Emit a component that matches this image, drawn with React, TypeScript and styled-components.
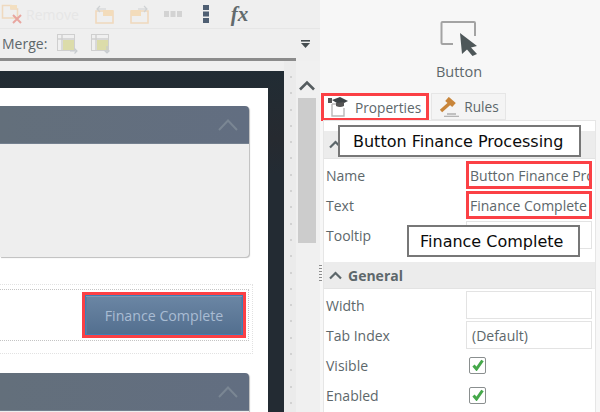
import React from "react";
import styled, { createGlobalStyle } from "styled-components";

const GlobalStyle = createGlobalStyle`
  html, body {
    margin: 0;
    padding: 0;
    background: #f7f7f7;
    font-family: "Open Sans", "Liberation Sans", sans-serif;
  }
`;

const Page = styled.div`
  display: flex;
  width: 600px;
  height: 412px;
  overflow: hidden;
`;

const LeftColumn = styled.div`
  display: flex;
  flex-direction: column;
  width: 320px;
  flex: none;
  background: #efefef;
`;

const ToolRow = styled.div`
  display: flex;
  align-items: center;
  height: 29px;
  flex: none;
  padding-left: 1px;
  border-bottom: 1px solid #e6e6e6;
  box-sizing: border-box;
`;

const MergeRow = styled.div`
  display: flex;
  align-items: center;
  height: 29px;
  flex: none;
  padding: 0 10px 0 2px;
`;

const ToolIcon = styled.svg<{ $left?: number }>`
  flex: none;
  margin-left: ${p => p.$left ?? 0}px;
`;

const DropArrow = styled.svg`
  flex: none;
  margin-left: auto;
`;

const RemoveLabel = styled.span`
  margin-left: 4px;
  font-size: 14px;
  color: #e6e6e6;
`;

const FxLabel = styled.span`
  margin-left: 22px;
  font-family: "Liberation Serif", serif;
  font-size: 21px;
  font-style: italic;
  font-weight: 700;
  line-height: 1;
  color: #626a6d;
`;

const MergeLabel = styled.span`
  font-size: 14px;
  color: #5d676b;
`;

const Ruler = styled.div`
  width: 296px;
  height: 3px;
  flex: none;
  background: #8b8b8b;
`;

const Workspace = styled.div`
  display: flex;
  flex: 1;
  min-height: 0;
`;

const Canvas = styled.div`
  width: 284px;
  flex: none;
  margin-top: 10px;
  padding: 17px 16px 0 0;
  box-sizing: border-box;
  background: linear-gradient(#212c34, #262a30 20%, #232b33 30%);
`;

const Sheet = styled.div`
  height: 100%;
  padding-top: 18px;
  box-sizing: border-box;
  background: #fff;
  overflow: hidden;
`;

const Panel = styled.div<{ $height: number }>`
  width: 249px;
  height: ${p => p.$height}px;
  background: #eeeeee;
  border-radius: 0 4px 4px 0;
  box-shadow: 1px 1px 1px #bdbdbd;
  overflow: hidden;
`;

const PanelHeader = styled.div`
  display: flex;
  align-items: center;
  justify-content: flex-end;
  height: 38px;
  padding-right: 11px;
  box-sizing: border-box;
  background: linear-gradient(90deg, #636f7b, #626e81);
  border-bottom: 1px solid #74808f;
`;

const OuterSlot = styled.div`
  width: 253px;
  height: 70px;
  margin: 27px 0 19px;
  padding-top: 4px;
  box-sizing: border-box;
  border: 1px dotted #e2e2e2;
  border-left: none;
`;

const InnerSlot = styled.div`
  display: flex;
  justify-content: flex-end;
  width: 249px;
  height: 52px;
  padding: 5px 5px 0 0;
  box-sizing: border-box;
  border: 1px dotted #c4c4c4;
  border-left: none;
`;

const FinanceButton = styled.div`
  display: flex;
  align-items: center;
  justify-content: center;
  width: 158px;
  height: 40px;
  box-sizing: border-box;
  background: linear-gradient(#6b86a4, #536f8f);
  border: 1px solid #3b80b8;
  box-shadow: inset 0 1px 0 #7f97b1, inset 1px 0 0 #5d7c9e, inset -1px 0 0 #5d7c9e;
  outline: 3px solid #fb4045;
  color: #a9bcd3;
  font-size: 14.2px;
`;

const DotRail = styled.div`
  width: 12px;
  flex: none;
  background-color: #ebebeb;
  position: relative;
  &::after {
    content: "";
    position: absolute;
    left: 6px;
    top: 15px;
    bottom: 0;
    width: 2px;
    background: repeating-linear-gradient(#d2d2d2 0 2px, transparent 2px 16.3px);
  }
`;

const ScrollGutter = styled.div`
  display: flex;
  flex-direction: column;
  align-items: center;
  width: 24px;
  flex: none;
  padding: 19px 2px 0 0;
  box-sizing: border-box;
  background: #f0f0f0;
`;

const ScrollThumb = styled.div`
  width: 18px;
  height: 145px;
  margin-top: 7px;
  background: #cccccc;
`;

const RightColumn = styled.div`
  position: relative;
  flex: 1;
  min-width: 0;
  display: flex;
  flex-direction: column;
  background: #f7f7f7;
`;

const ResizeGrip = styled.div`
  position: absolute;
  left: -1px;
  top: 265px;
  width: 3px;
  height: 18px;
  background: repeating-linear-gradient(#8c8c8c 0 1px, transparent 1px 3px);
`;

const Preview = styled.div`
  display: flex;
  flex-direction: column;
  align-items: center;
  height: 93px;
  flex: none;
  padding: 20px 2px 0 0;
  box-sizing: border-box;
`;

const PreviewLabel = styled.span`
  margin-top: 6px;
  font-size: 14.5px;
  color: #5d676b;
`;

const Tabs = styled.div`
  display: flex;
  align-items: flex-start;
  height: 27px;
  flex: none;
  padding-left: 1px;
  gap: 2px;
`;

const Tab = styled.div<{ $marked?: boolean }>`
  display: flex;
  align-items: center;
  height: ${p => (p.$marked ? 28 : 27)}px;
  box-sizing: border-box;
  color: #5d676b;
  font-size: 13.7px;
  gap: ${p => (p.$marked ? 7 : 4)}px;
  padding: ${p => (p.$marked ? "0 5px 0 4px" : "0 6px")};
  background: ${p => (p.$marked ? "#fff" : "#f4f4f4")};
  border: ${p => (p.$marked ? "3px solid #fb4045" : "1px solid #e6e6e6")};
`;

const PropertyBody = styled.div`
  flex: 1;
  min-height: 0;
  margin: 0 4px 0 3px;
  padding-top: 10px;
  background: #fff;
  border: 1px solid #e6e6e6;
  border-bottom: none;
`;

const SectionHeader = styled.div<{ $gap?: number; $height: number }>`
  display: flex;
  align-items: center;
  gap: 6px;
  height: ${p => p.$height}px;
  margin-top: ${p => p.$gap ?? 0}px;
  margin-bottom: 1px;
  padding-left: 5px;
  background: #ececec;
  border-bottom: 1px solid #e3e3e3;
  box-sizing: border-box;
  color: #5d676b;
  font-size: 14px;
  font-weight: 700;
`;

const PropertyRow = styled.div`
  display: grid;
  grid-template-columns: 140px 1fr;
  align-items: center;
  height: 30px;
  padding-left: 2px;
  color: #5d676b;
  font-size: 14px;
`;

const FieldBox = styled.div<{ $marked?: boolean }>`
  display: flex;
  align-items: center;
  height: 28px;
  margin-right: 3px;
  padding-left: ${p => (p.$marked ? 1 : 5)}px;
  box-sizing: border-box;
  overflow: hidden;
  white-space: nowrap;
  background: #fff;
  border: ${p => (p.$marked ? "3px solid #fb4045" : "1px solid #e3e3e3")};
  color: #5d676b;
  font-size: 14px;
`;

const CheckBox = styled.div`
  display: flex;
  align-items: center;
  justify-content: center;
  width: 17px;
  height: 17px;
  margin-left: 3px;
  box-sizing: border-box;
  background: #fff;
  border: 1px solid #8a8f8f;
  border-radius: 2px;
`;

const Callout = styled.div<{ $left: number; $top: number; $width: number; $inset: number }>`
  position: absolute;
  left: ${p => p.$left}px;
  top: ${p => p.$top}px;
  width: ${p => p.$width}px;
  height: 32px;
  display: flex;
  align-items: center;
  padding-left: ${p => p.$inset}px;
  box-sizing: border-box;
  background: #fff;
  border: 2px solid #777;
  color: #0b0b0b;
  font-family: "DejaVu Sans", sans-serif;
  font-size: 16px;
`;

const PanelChevron = () => (
  <svg width="20" height="14" viewBox="0 0 20 14" fill="none">
    <path d="M1 12 L10 2.5 L19 12" stroke="#7a8693" strokeWidth="2" />
  </svg>
);

const SectionChevron = () => (
  <svg width="13" height="9" viewBox="0 0 13 9" fill="none">
    <path d="M1 7.5 L6.5 2 L12 7.5" stroke="#5d676b" strokeWidth="2.2" />
  </svg>
);

const Check = () => (
  <svg width="12" height="12" viewBox="0 0 12 12" fill="none">
    <path d="M1.5 6.5 L4.5 10 L10.5 1.5" stroke="#45a84a" strokeWidth="3" />
  </svg>
);

const RemoveIcon = () => (
  <ToolIcon width="21" height="20" viewBox="0 0 21 20" fill="none">
    <path d="M1.5 1.5 H10 V5 H16.5 V14 H1.5 Z" stroke="#efd9bf" strokeWidth="1.6" />
    <rect x="9" y="1" width="7" height="4" fill="#f3dfc0" />
    <path d="M12 11 L20 19 M20 11 L12 19" stroke="#e8a6a0" strokeWidth="2" />
  </ToolIcon>
);

const FolderArrowIcon = ({ left, flip }: { left: number; flip?: boolean }) => (
  <ToolIcon $left={left} width="19" height="20" viewBox="0 0 19 20" fill="none">
    <path d="M1 7 H18 V19 H1 Z" stroke="#f0d9bd" strokeWidth="1.6" />
    <rect x={flip ? 1 : 8} y="6" width="10" height="6" fill="#f3dcbb" />
    {flip ? (
      <path d="M8 5 H17 M14 2 L17 5 L14 8" stroke="#cfd2d4" strokeWidth="1.2" />
    ) : (
      <path d="M11 5 H2 M5 2 L2 5 L5 8" stroke="#cfd2d4" strokeWidth="1.2" />
    )}
  </ToolIcon>
);

const MergeIcon = ({ left, down }: { left: number; down?: boolean }) => (
  <ToolIcon $left={left} width="21" height="20" viewBox="0 0 21 20" fill="none">
    <rect x="0.5" y="0.5" width="17" height="16" fill="#f0f0f0" stroke="#cfcfcf" />
    <path d="M0.5 5 H17.5 M5 0.5 V16.5" stroke="#cfcfcf" strokeWidth="1.4" />
    <rect x="6" y="6" width="11" height="10" fill="#dcdcaa" />
    {down ? (
      <path d="M16 12 V19 M13.5 16.5 L16 19 L18.5 16.5" stroke="#c8cccf" strokeWidth="1.2" />
    ) : (
      <path d="M13 17 H20 M17.5 14.5 L20 17 L17.5 19.5" stroke="#c8cccf" strokeWidth="1.2" />
    )}
  </ToolIcon>
);

const App = () => (
  <Page>
    <GlobalStyle />
    <LeftColumn>
      <ToolRow>
        <RemoveIcon />
        <RemoveLabel>Remove</RemoveLabel>
        <FolderArrowIcon left={16} />
        <FolderArrowIcon left={16} flip />
        <ToolIcon $left={15} width="18" height="6" viewBox="0 0 18 6" fill="#d3d3d3">
          <rect x="0" y="0" width="5" height="6" />
          <rect x="6.5" y="0" width="5" height="6" />
          <rect x="13" y="0" width="5" height="6" />
        </ToolIcon>
        <ToolIcon $left={21} width="6" height="18" viewBox="0 0 6 18" fill="#4f5f73">
          <rect x="0" y="0" width="6" height="5" />
          <rect x="0" y="6.5" width="6" height="5" />
          <rect x="0" y="13" width="6" height="5" />
        </ToolIcon>
        <FxLabel>fx</FxLabel>
      </ToolRow>
      <MergeRow>
        <MergeLabel>Merge:</MergeLabel>
        <MergeIcon left={10} />
        <MergeIcon left={13} down />
        <DropArrow width="9" height="8" viewBox="0 0 9 8" fill="#454d50">
          <rect x="0" y="0" width="9" height="1.6" />
          <path d="M0 3 H9 L4.5 8 Z" />
        </DropArrow>
      </MergeRow>
      <Ruler />
      <Workspace>
        <Canvas>
          <Sheet>
            <Panel $height={151}>
              <PanelHeader>
                <PanelChevron />
              </PanelHeader>
            </Panel>
            <OuterSlot>
              <InnerSlot>
                <FinanceButton>Finance Complete</FinanceButton>
              </InnerSlot>
            </OuterSlot>
            <Panel $height={120}>
              <PanelHeader>
                <PanelChevron />
              </PanelHeader>
            </Panel>
          </Sheet>
        </Canvas>
        <DotRail />
        <ScrollGutter>
          <svg width="16" height="11" viewBox="0 0 16 11" fill="none">
            <path d="M1 9.5 L8 2.5 L15 9.5" stroke="#555c5f" strokeWidth="2.6" />
          </svg>
          <ScrollThumb />
        </ScrollGutter>
      </Workspace>
    </LeftColumn>
    <RightColumn>
      <ResizeGrip />
      <Preview>
        <svg width="38" height="36" viewBox="0 0 38 36" fill="none">
          <path d="M13 24 H2.5 Q1.5 24 1.5 23 V3 Q1.5 2 2.5 2 H34 Q35 2 35 3 V16" stroke="#a3a3a3" strokeWidth="2" />
          <path d="M20 13 L37 26 L31 27.5 L37 34 L32.5 36 L27 29.5 L22 34 Z" fill="#4e5759" />
        </svg>
        <PreviewLabel>Button</PreviewLabel>
      </Preview>
      <Tabs>
        <Tab $marked>
          <svg width="20" height="20" viewBox="0 0 20 20" fill="none">
            <path d="M4 7 H15 M4 7 V19 H16 V11" stroke="#b9b9b9" strokeWidth="1.4" />
            <rect x="0" y="1" width="4" height="5" fill="#555" />
            <path d="M4 3 L12 0 L20 4 L12 8 Z" fill="#3d4346" />
            <path d="M8 6 V9 Q12 11 16 9 V5" fill="#555" />
          </svg>
          Properties
        </Tab>
        <Tab>
          <svg width="22" height="20" viewBox="0 0 22 20" fill="none">
            <path d="M9 2 L16 8" stroke="#c8853a" strokeWidth="5.5" />
            <path d="M12 6 L3 14" stroke="#c8853a" strokeWidth="3.4" />
            <path d="M9 17 H18" stroke="#b5b5b5" strokeWidth="1.6" />
            <path d="M6 19.5 H21" stroke="#b5b5b5" strokeWidth="1.6" />
          </svg>
          Rules
        </Tab>
      </Tabs>
      <PropertyBody>
        <SectionHeader $height={28}>
          <SectionChevron />
        </SectionHeader>
        <PropertyRow>
          Name
          <FieldBox $marked>Button Finance Processing</FieldBox>
        </PropertyRow>
        <PropertyRow>
          Text
          <FieldBox $marked>Finance Complete</FieldBox>
        </PropertyRow>
        <PropertyRow>
          Tooltip
          <FieldBox />
        </PropertyRow>
        <SectionHeader $gap={12} $height={27}>
          <SectionChevron />
          General
        </SectionHeader>
        <PropertyRow>
          Width
          <FieldBox />
        </PropertyRow>
        <PropertyRow>
          Tab Index
          <FieldBox>(Default)</FieldBox>
        </PropertyRow>
        <PropertyRow>
          Visible
          <CheckBox>
            <Check />
          </CheckBox>
        </PropertyRow>
        <PropertyRow>
          Enabled
          <CheckBox>
            <Check />
          </CheckBox>
        </PropertyRow>
      </PropertyBody>
      <Callout $left={18} $top={125} $width={243} $inset={13}>Button Finance Processing</Callout>
      <Callout $left={87} $top={225} $width={173} $inset={11}>Finance Complete</Callout>
    </RightColumn>
  </Page>
);

export default App;
